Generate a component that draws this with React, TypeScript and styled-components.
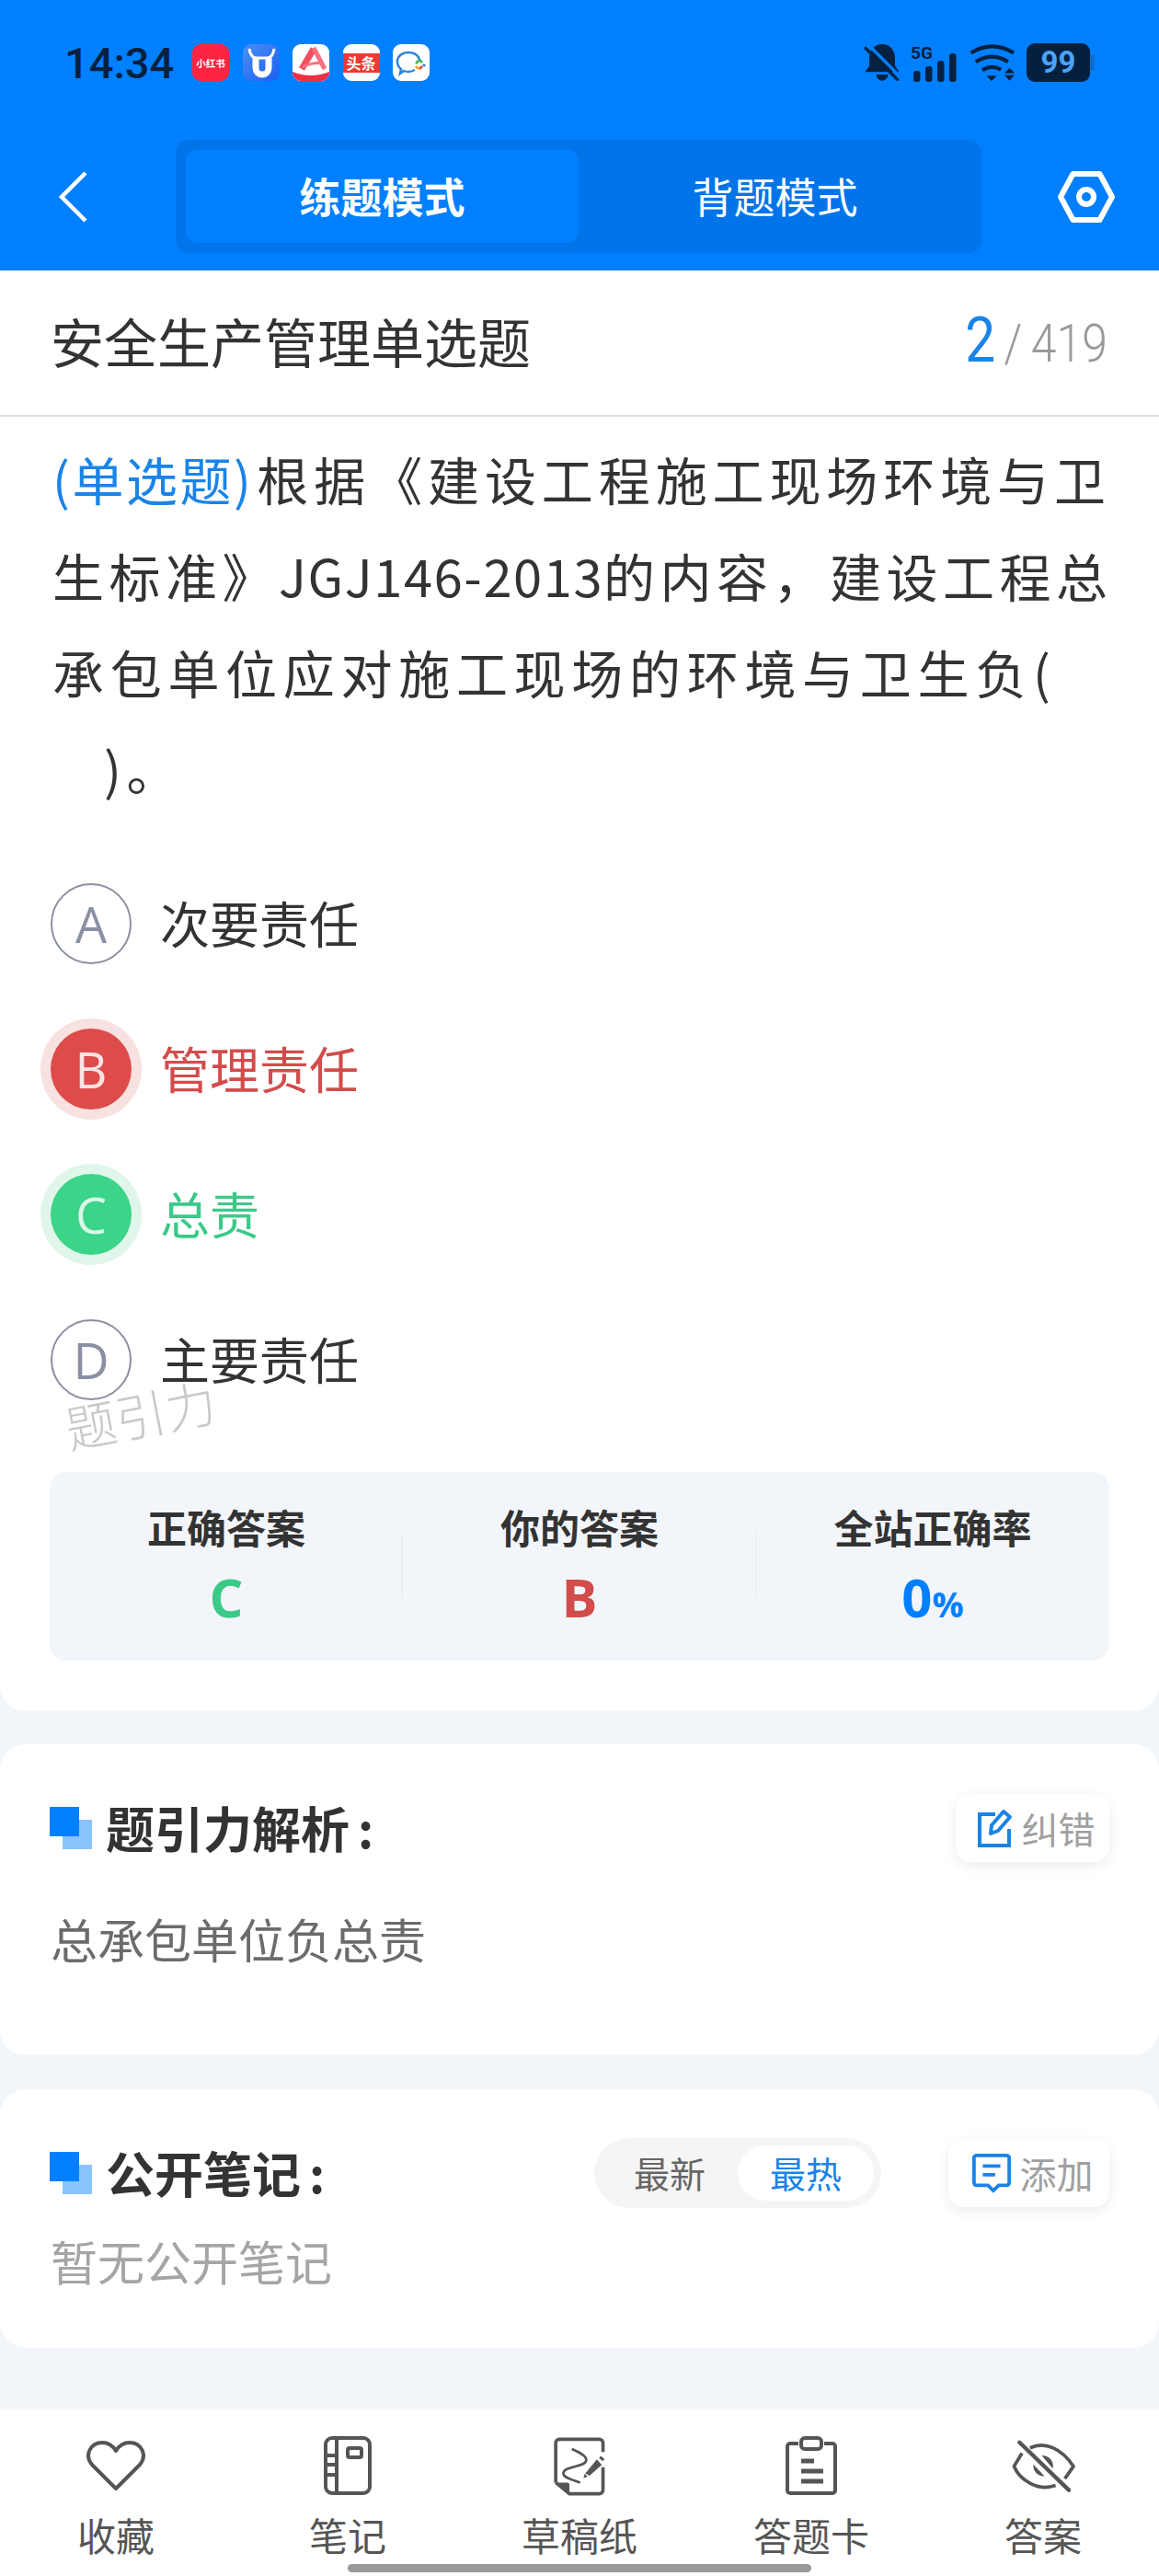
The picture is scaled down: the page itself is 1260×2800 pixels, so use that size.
import React from 'react';
import styled, { createGlobalStyle } from 'styled-components';

const blue = '#0080ff';
const linkBlue = '#1a84e8';
const red = '#d24c4c';
const green = '#3bc987';
const ink = '#333333';
const fullWidthComma = '\uFF0C';

const GlobalStyle = createGlobalStyle`
    html, body {
        margin: 0;
        padding: 0;
        background: #f2f6fa;
    }
    * {
        box-sizing: border-box;
    }
    body {
        font-family: "Noto Sans CJK SC", "Noto Sans", sans-serif;
    }
`;

const Page = styled.div`
    position: relative;
    width: 1260px;
    height: 2800px;
    display: flex;
    flex-direction: column;
    overflow: hidden;
    background: #f2f6fa;
`;

const Header = styled.header`
    height: 294px;
    background: ${blue};
    flex: none;
`;

const StatusBar = styled.div`
    height: 152px;
    padding: 0 75px 16px 70px;
    display: flex;
    align-items: center;
`;

const Time = styled.span`
    font-family: Roboto, sans-serif;
    font-size: 47px;
    font-weight: 500;
    color: #06213f;
    width: 139px;
    white-space: nowrap;
`;

const AppIcons = styled.div`
    display: flex;
    gap: 14.5px;
`;

const AppIcon = styled.div<{ $bg: string }>`
    position: relative;
    width: 40px;
    height: 40px;
    border-radius: 9px;
    overflow: hidden;
    display: flex;
    align-items: center;
    justify-content: center;
    background: ${({ $bg }) => $bg};
    color: #fff;
    font-size: 10.5px;
    font-weight: 700;
    white-space: nowrap;
`;

const HeadlineBand = styled.div`
    width: 100%;
    height: 21px;
    background: #ee3b30;
    color: #fff;
    font-size: 16px;
    font-weight: 700;
    line-height: 21px;
    text-align: center;
`;

const StatusRight = styled.div`
    margin-left: auto;
    display: flex;
    align-items: center;
    gap: 11px;
`;

const Battery = styled.div`
    position: relative;
    width: 69px;
    height: 42px;
    border-radius: 9px;
    background: #05203f;
    color: #4aa3ff;
    font-family: Roboto, sans-serif;
    font-size: 33px;
    font-weight: 700;
    line-height: 42px;
    text-align: center;

    &::after {
        content: "";
        position: absolute;
        right: -5px;
        top: 12px;
        width: 5px;
        height: 18px;
        border-radius: 0 3px 3px 0;
        background: #0b6bd0;
    }
`;

const NavBar = styled.div`
    height: 142px;
    padding: 0 48px 19px 64px;
    display: flex;
    align-items: center;
    justify-content: space-between;
`;

const Segment = styled.div`
    width: 876px;
    height: 123px;
    margin-left: 12px;
    padding: 11px;
    border-radius: 14px;
    background: #0074e8;
    display: grid;
    grid-template-columns: 1fr 1fr;
`;

const SegmentTab = styled.div<{ $active?: boolean }>`
    display: flex;
    align-items: center;
    justify-content: center;
    padding-bottom: 3px;
    border-radius: 12px;
    color: #fff;
    font-size: 45px;
    font-weight: ${({ $active }) => ($active ? 700 : 400)};
    background: ${({ $active }) => ($active ? blue : 'transparent')};
`;

const Card = styled.section`
    background: #fff;
    border-radius: 28px;
    flex: none;
`;

const QuestionCard = styled(Card)`
    position: relative;
    height: 1566px;
    border-radius: 0 0 28px 28px;
`;

const TitleRow = styled.div`
    height: 159px;
    padding: 0 56px 6px 55px;
    border-bottom: 2px solid #dddddd;
    display: flex;
    align-items: center;
    justify-content: space-between;
`;

const PaperTitle = styled.h1`
    margin: 0;
    font-size: 58px;
    font-weight: 400;
    color: ${ink};
`;

const Counter = styled.div`
    display: flex;
    align-items: baseline;
    font-family: Roboto, sans-serif;
    font-weight: 300;
    color: #999999;
    font-size: 58px;
    transform: scaleX(0.86);
    transform-origin: right center;
`;

const CounterCurrent = styled.span`
    color: ${linkBlue};
    font-size: 68px;
    font-weight: 400;
    margin-right: 11px;
`;

const CounterSlash = styled.span`
    margin-right: 11px;
`;

const Question = styled.div`
    padding: 14px 0 0 57px;
    font-size: 56px;
    line-height: 105px;
    color: ${ink};
`;

const QuestionLine = styled.div<{ $indent?: number; $spacing: number }>`
    white-space: nowrap;
    padding-left: ${({ $indent }) => $indent || 0}px;
    letter-spacing: ${({ $spacing }) => $spacing}px;
`;

const QuestionType = styled.span`
    color: ${linkBlue};
    letter-spacing: 2.5px;
    margin-right: 4px;
`;

const LatinCode = styled.span`
    letter-spacing: 1.6px;
`;

const Options = styled.div`
    margin-top: 38px;
    padding: 0 55px;
`;

const OptionRow = styled.div`
    height: 158px;
    display: flex;
    align-items: center;
    gap: 31px;
`;

type OptionState = 'idle' | 'wrong' | 'right';

const badgeFill = { idle: '#fff', wrong: '#de4b4b', right: '#3bd488' };
const badgeRing = { idle: 'transparent', wrong: '#f8e1e1', right: '#e0f6ea' };
const badgeInk = { idle: '#8b8fa3', wrong: '#fbe3e3', right: '#d9f8e8' };
const optionInk = { idle: ink, wrong: red, right: green };

const OptionBadge = styled.div<{ $state: OptionState }>`
    width: 88px;
    height: 88px;
    flex: none;
    border-radius: 50%;
    display: flex;
    align-items: center;
    justify-content: center;
    font-family: "Open Sans", sans-serif;
    font-size: 54px;
    font-weight: 400;
    color: ${({ $state }) => badgeInk[$state]};
    background: ${({ $state }) => badgeFill[$state]};
    border: ${({ $state }) => ($state === 'idle' ? '2px solid #8b8fa3' : 'none')};
    box-shadow: 0 0 0 11px ${({ $state }) => badgeRing[$state]};
`;

const OptionText = styled.span<{ $state: OptionState }>`
    font-size: 54px;
    padding-bottom: 4px;
    color: ${({ $state }) => optionInk[$state]};
`;

const Watermark = styled.div`
    position: absolute;
    left: 70px;
    top: 1202px;
    font-size: 55px;
    font-weight: 300;
    color: #c9c9c9;
    transform: rotate(-11deg);
    pointer-events: none;
`;

const Stats = styled.div`
    margin: 43px 54px 0;
    height: 205px;
    padding-top: 27px;
    border-radius: 18px;
    background: #f2f6fa;
    display: grid;
    grid-template-columns: repeat(3, 1fr);
`;

const StatCell = styled.div<{ $divider?: boolean }>`
    position: relative;
    display: flex;
    flex-direction: column;
    align-items: center;

    ${({ $divider }) =>
        $divider &&
        `
        &::after {
            content: "";
            position: absolute;
            right: 0;
            top: 38px;
            height: 73px;
            width: 1px;
            background: #e6eaef;
        }
    `}
`;

const StatLabel = styled.div`
    font-size: 43px;
    line-height: 64px;
    font-weight: 700;
    color: ${ink};
`;

const StatValue = styled.div<{ $color: string }>`
    margin-top: 7px;
    font-family: "Open Sans", sans-serif;
    font-size: 58px;
    line-height: 76px;
    font-weight: 700;
    color: ${({ $color }) => $color};
`;

const StatUnit = styled.span`
    font-size: 38px;
`;

const SectionHead = styled.div`
    display: flex;
    align-items: center;
`;

const SectionMark = styled.div`
    position: relative;
    width: 46px;
    height: 46px;
    margin-right: 15px;
    flex: none;
    background: linear-gradient(#8ac4ff, #8ac4ff) 14px 14px / 32px 32px no-repeat;

    &::before {
        content: "";
        position: absolute;
        left: 0;
        top: 0;
        width: 32px;
        height: 32px;
        background: ${blue};
    }
`;

const SectionTitle = styled.h2`
    margin: -3px 0 0;
    font-size: 53px;
    font-weight: 700;
    color: ${ink};
`;

const TitleColon = styled.span`
    margin-left: 9px;
`;

const ActionButton = styled.div<{ $width: number }>`
    width: ${({ $width }) => $width}px;
    height: 74px;
    margin-left: auto;
    padding-left: 7px;
    border-radius: 16px;
    background: #fff;
    box-shadow: 0 4px 14px rgba(0, 0, 0, 0.08);
    display: flex;
    align-items: center;
    justify-content: center;
    gap: 9px;
    color: #a0a0a0;
    font-size: 40px;
    flex: none;
`;

const AnalysisCard = styled(Card)`
    height: 338px;
    margin-top: 36px;
    padding: 54px 54px 0;
`;

const AnalysisText = styled.p`
    margin: 43px 0 0 1px;
    font-size: 51px;
    line-height: 80px;
    color: #6b6b6b;
`;

const NotesCard = styled(Card)`
    height: 281px;
    margin-top: 37px;
    padding: 53px 54px 0;
`;

const Toggle = styled.div`
    width: 312px;
    height: 76px;
    margin-left: auto;
    margin-right: 73px;
    padding: 8px;
    border-radius: 38px;
    background: #f5f5f5;
    display: flex;
    align-items: center;
    justify-content: space-between;
    flex: none;
`;

const ToggleOption = styled.div<{ $active?: boolean }>`
    width: 148px;
    height: 60px;
    padding-bottom: 3px;
    border-radius: 30px;
    display: flex;
    align-items: center;
    justify-content: center;
    font-size: 39px;
    color: ${({ $active }) => ($active ? linkBlue : '#666666')};
    background: ${({ $active }) => ($active ? '#fff' : 'transparent')};
`;

const ActionSlot = styled.div`
    flex: none;
`;

const EmptyNote = styled.p`
    margin: 21px 0 0 1px;
    font-size: 51px;
    line-height: 72px;
    color: #a5a5a5;
`;

const TabBar = styled.nav`
    height: 182px;
    margin-top: auto;
    padding-top: 29px;
    background: #fff;
    display: grid;
    grid-template-columns: repeat(5, 1fr);
    flex: none;
`;

const TabItem = styled.div`
    display: flex;
    flex-direction: column;
    align-items: center;
`;

const TabIcon = styled.div`
    height: 66px;
    display: flex;
    align-items: center;
    justify-content: center;
`;

const TabLabel = styled.div`
    margin-top: 14px;
    font-size: 42px;
    line-height: 56px;
    color: #555555;
`;

const HomeIndicator = styled.div`
    position: absolute;
    left: 378px;
    bottom: 4px;
    width: 504px;
    height: 9px;
    border-radius: 5px;
    background: #999999;
`;

const BellOffIcon = () => (
    <svg width="40" height="42" viewBox="28 32 120 126" fill="#06213f">
        <path d="M88 35c27 0 42 21 42 47v24l12 17v3H34v-3l12-17V82c0-26 15-47 42-47z" />
        <path d="M68 134h40c-2 12-10 20-20 20s-18-8-20-20z" />
        <path d="M44 38l100 100" stroke={blue} strokeWidth="10" />
        <path d="M34 48l104 102" stroke="#06213f" strokeWidth="10" strokeLinecap="round" />
    </svg>
);

const SignalIcon = () => (
    <svg width="52" height="44" viewBox="0 0 52 44" fill="#06213f">
        <text x="0" y="18" fontFamily="Roboto, sans-serif" fontSize="19" fontWeight="700">
            5G
        </text>
        <rect x="3" y="31" width="7.5" height="12" rx="3" />
        <rect x="16" y="26" width="7.5" height="17" rx="3" />
        <rect x="29" y="20" width="7.5" height="23" rx="3" />
        <rect x="42" y="12" width="7.5" height="31" rx="3" />
    </svg>
);

const WifiIcon = () => (
    <svg width="52" height="41" viewBox="368 34 160 124" fill="none" stroke="#06213f" strokeWidth="13">
        <path d="M376 62Q447 18 519 62" />
        <path d="M392 92Q447 58 500 92" />
        <path d="M414 120Q445 100 476 118" />
        <path d="M428 138H462L445 157z" fill="#06213f" stroke="none" />
        <path d="M505 112L522 130H488zM505 155L522 136H488z" fill="#06213f" stroke="none" />
    </svg>
);

const BackIcon = () => (
    <svg width="32" height="56" viewBox="0 0 32 56" fill="none" stroke="#fff" strokeWidth="4.5">
        <path d="M29 2L3 28l26 26" />
    </svg>
);

const SettingsIcon = () => (
    <svg width="62" height="56" viewBox="0 0 62 56" fill="none" stroke="#fff" strokeWidth="6">
        <path d="M16.5 3h29L59 28 45.5 53h-29L3 28z" strokeLinejoin="round" />
        <circle cx="31" cy="28" r="8" />
    </svg>
);

const CowIcon = () => (
    <svg width="40" height="40" viewBox="0 0 40 40" fill="none" stroke="#fff">
        <path d="M7 5c1 7 4 10 8 10h11c4 0 7-3 8-10" strokeWidth="3" />
        <path d="M14 15v11a7 7 0 0 0 14 0V15" strokeWidth="7" />
    </svg>
);

const PeakIcon = () => (
    <svg width="40" height="40" viewBox="0 0 40 40" fill="none">
        <path d="M23 5L10 27" stroke="#f0505f" strokeWidth="7" />
        <path d="M23 4L35 27" stroke="#f7737f" strokeWidth="5" />
        <path d="M11 25Q22 19 33 21" stroke="#f7737f" strokeWidth="3" />
        <path d="M0 30Q20 38 40 30V40H0z" fill="#ee2f44" />
    </svg>
);

const ChatIcon = () => (
    <svg width="40" height="40" viewBox="0 0 40 40" fill="none">
        <path d="M24 28c-2 1-4 2-7 2-2 0-3 0-5-1l-4 3 1-5c-3-2-4-5-4-8 0-6 5-10 12-10s12 4 12 9" stroke="#2a86d8" strokeWidth="2.5" />
        <path d="M29 17l3 3M25 21l3-3" stroke="#3bb54a" strokeWidth="2.5" />
        <path d="M25 24l3 3" stroke="#f5a623" strokeWidth="2.5" />
        <path d="M29 27l3-3" stroke="#e8452c" strokeWidth="2.5" />
        <path d="M33 22l2 2" stroke="#2a86d8" strokeWidth="2.5" />
    </svg>
);

const EditIcon = () => (
    <svg width="40" height="44" viewBox="0 0 40 44" fill="none" stroke={linkBlue} strokeWidth="4">
        <path d="M20 7H3v34h32V23" />
        <path d="M15 28l1-9L29 4l7 6-13 15z" strokeLinejoin="round" />
    </svg>
);

const CommentIcon = () => (
    <svg width="44" height="44" viewBox="0 0 46 46" fill="none" stroke={linkBlue} strokeWidth="4">
        <path d="M6 3h34a3 3 0 0 1 3 3v28a3 3 0 0 1-3 3H31l-6 6-6-6H6a3 3 0 0 1-3-3V6a3 3 0 0 1 3-3z" />
        <path d="M13 15h20M13 25h14" />
    </svg>
);

const HeartIcon = () => (
    <svg width="64" height="56" viewBox="0 0 64 56" fill="none" stroke="#555" strokeWidth="4">
        <path d="M32 53L6 27C-3 16 5 3 17 3c7 0 12 4 15 9 3-5 8-9 15-9 12 0 20 13 11 24z" strokeLinejoin="round" />
    </svg>
);

const NotebookIcon = () => (
    <svg width="52" height="64" viewBox="0 0 52 64" fill="none" stroke="#555" strokeWidth="4">
        <rect x="2" y="2" width="48" height="60" rx="7" />
        <path d="M14 2v60M2 21h12M2 31h12M2 42h12" />
        <rect x="26" y="13" width="15" height="10" rx="2" />
    </svg>
);

const DraftIcon = () => (
    <svg width="58" height="65" viewBox="66 48 174 196" fill="none" stroke="#555" strokeWidth="11">
        <path d="M75 200V70a12 12 0 0 1 12-12H218a12 12 0 0 1 12 12V100M230 150V225a12 12 0 0 1-12 12H120L75 200" />
        <path d="M78 200H112a8 8 0 0 1 8 8V236z" fill="#555" stroke="none" />
        <path d="M128 90C150 100 178 112 175 128C172 150 105 145 100 168C98 185 135 192 155 200" strokeWidth="8" />
        <path d="M172 170L210 124L226 142L186 178zM166 186L170 172L180 180z" fill="#555" stroke="none" />
        <path d="M220 116L232 127" strokeWidth="9" />
    </svg>
);

const ClipboardIcon = () => (
    <svg width="56" height="64" viewBox="0 0 56 64" fill="none" stroke="#555" strokeWidth="4">
        <path d="M14 8H5a3 3 0 0 0-3 3v48a3 3 0 0 0 3 3h46a3 3 0 0 0 3-3V11a3 3 0 0 0-3-3h-9" />
        <rect x="17" y="2" width="22" height="12" rx="4" />
        <path d="M17 27h14M17 38h24M17 49h24" strokeWidth="5" />
    </svg>
);

const EyeOffIcon = () => (
    <svg width="71" height="57" viewBox="60 62 212 170" fill="none" stroke="#555" strokeWidth="11">
        <path d="M122 88C170 65 225 90 263 148L235 188" strokeLinejoin="round" />
        <path d="M96 105L70 148C90 195 150 230 205 210" strokeLinejoin="round" />
        <path d="M160 113a34 34 0 0 1 36 42zM133 142a34 34 0 0 0 36 38z" fill="#555" stroke="none" />
        <path d="M88 70L248 225" strokeWidth="13" strokeLinecap="round" />
    </svg>
);

const options: { key: string; text: string; state: OptionState }[] = [
    { key: 'A', text: '次要责任', state: 'idle' },
    { key: 'B', text: '管理责任', state: 'wrong' },
    { key: 'C', text: '总责', state: 'right' },
    { key: 'D', text: '主要责任', state: 'idle' },
];

const tabs = [
    { label: '收藏', icon: <HeartIcon /> },
    { label: '笔记', icon: <NotebookIcon /> },
    { label: '草稿纸', icon: <DraftIcon /> },
    { label: '答题卡', icon: <ClipboardIcon /> },
    { label: '答案', icon: <EyeOffIcon /> },
];

const App: React.FC = () => (
    <Page>
        <GlobalStyle />
        <Header>
            <StatusBar>
                <Time>14:34</Time>
                <AppIcons>
                    <AppIcon $bg="#ff2442">小红书</AppIcon>
                    <AppIcon $bg="linear-gradient(135deg, #4a90f5, #1a5ff0)">
                        <CowIcon />
                    </AppIcon>
                    <AppIcon $bg="#fff">
                        <PeakIcon />
                    </AppIcon>
                    <AppIcon $bg="#fff">
                        <HeadlineBand>头条</HeadlineBand>
                    </AppIcon>
                    <AppIcon $bg="#fff">
                        <ChatIcon />
                    </AppIcon>
                </AppIcons>
                <StatusRight>
                    <BellOffIcon />
                    <SignalIcon />
                    <WifiIcon />
                    <Battery>99</Battery>
                </StatusRight>
            </StatusBar>
            <NavBar>
                <BackIcon />
                <Segment>
                    <SegmentTab $active>练题模式</SegmentTab>
                    <SegmentTab>背题模式</SegmentTab>
                </Segment>
                <SettingsIcon />
            </NavBar>
        </Header>

        <QuestionCard>
            <TitleRow>
                <PaperTitle>安全生产管理单选题</PaperTitle>
                <Counter>
                    <CounterCurrent>2</CounterCurrent>
                    <CounterSlash>/</CounterSlash>
                    419
                </Counter>
            </TitleRow>
            <Question>
                <QuestionLine $spacing={5.9}>
                    <QuestionType>(单选题)</QuestionType>根据《建设工程施工现场环境与卫
                </QuestionLine>
                <QuestionLine $spacing={5.5}>
                    生标准》<LatinCode>JGJ146-2013</LatinCode>的内容{fullWidthComma}建设工程总
                </QuestionLine>
                <QuestionLine $spacing={6.7}>承包单位应对施工现场的环境与卫生负(</QuestionLine>
                <QuestionLine $spacing={5.6} $indent={56}>)。</QuestionLine>
            </Question>
            <Options>
                {options.map((option) => (
                    <OptionRow key={option.key}>
                        <OptionBadge $state={option.state}>{option.key}</OptionBadge>
                        <OptionText $state={option.state}>{option.text}</OptionText>
                    </OptionRow>
                ))}
            </Options>
            <Watermark>题引力</Watermark>
            <Stats>
                <StatCell $divider>
                    <StatLabel>正确答案</StatLabel>
                    <StatValue $color={green}>C</StatValue>
                </StatCell>
                <StatCell $divider>
                    <StatLabel>你的答案</StatLabel>
                    <StatValue $color={red}>B</StatValue>
                </StatCell>
                <StatCell>
                    <StatLabel>全站正确率</StatLabel>
                    <StatValue $color={blue}>
                        0<StatUnit>%</StatUnit>
                    </StatValue>
                </StatCell>
            </Stats>
        </QuestionCard>

        <AnalysisCard>
            <SectionHead>
                <SectionMark />
                <SectionTitle>
                    题引力解析<TitleColon>:</TitleColon>
                </SectionTitle>
                <ActionButton $width={167}>
                    <EditIcon />
                    纠错
                </ActionButton>
            </SectionHead>
            <AnalysisText>总承包单位负总责</AnalysisText>
        </AnalysisCard>

        <NotesCard>
            <SectionHead>
                <SectionMark />
                <SectionTitle>
                    公开笔记<TitleColon>:</TitleColon>
                </SectionTitle>
                <Toggle>
                    <ToggleOption>最新</ToggleOption>
                    <ToggleOption $active>最热</ToggleOption>
                </Toggle>
                <ActionSlot>
                    <ActionButton $width={175}>
                        <CommentIcon />
                        添加
                    </ActionButton>
                </ActionSlot>
            </SectionHead>
            <EmptyNote>暂无公开笔记</EmptyNote>
        </NotesCard>

        <TabBar>
            {tabs.map((tab) => (
                <TabItem key={tab.label}>
                    <TabIcon>{tab.icon}</TabIcon>
                    <TabLabel>{tab.label}</TabLabel>
                </TabItem>
            ))}
        </TabBar>
        <HomeIndicator />
    </Page>
);

export default App;
